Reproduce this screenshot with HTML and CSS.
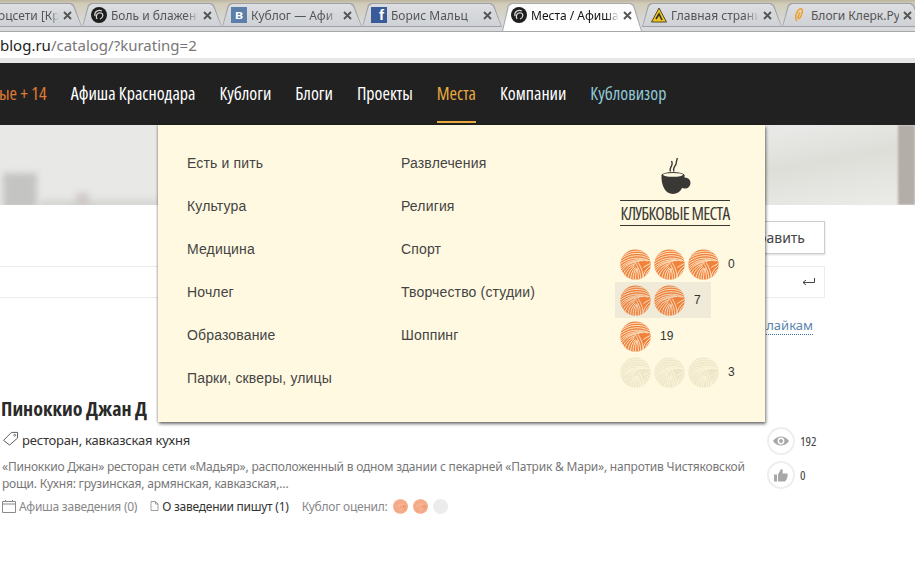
FILE: index.html
```html
<!DOCTYPE html>
<html lang="ru">
<head>
<meta charset="utf-8">
<title>Места / Афиша</title>
<link rel="stylesheet" href="styles.css">
</head>
<body>
<svg class="defs" width="0" height="0" aria-hidden="true">
  <defs>
    <clipPath id="ball-clip"><circle cx="16" cy="16" r="15.6"/></clipPath>
    <symbol id="ball" viewBox="0 0 32 32">
      <circle cx="16" cy="16" r="15.6" fill="currentColor"/>
      <g clip-path="url(#ball-clip)" fill="none" stroke="var(--gap)" stroke-width=".85">
        <path d="M2 8C9 2 20 0 28 5"/>
        <path d="M0 11C8 4 21 2 30 8"/>
        <path d="M0 13.500C8 6.500 21 4.500 31 10.500"/>
        <path d="M0 16C8 9 21 7 32 13"/>
        <path d="M0 19C7 12 18 9 29 12.500"/>
        <path d="M0 21.500C6 14.500 15 11.500 24 12"/>
        <path d="M1 24C5 17 12 13.500 20 13"/>
        <path d="M3 26C6 20 11 16 17 15"/>
        <path d="M5 28C7 23 10 19 15 16.500"/>
        <path d="M8 30C9 25 11 21 15 18"/>
        <path d="M11 31C11 26 13 22 16 19"/>
        <path d="M13.500 32C13.500 27 14.500 23 16.500 20"/>
        <path d="M16 32C16 27 16.500 23 17.500 20"/>
        <path d="M19 32C19 27 18.500 23 17.500 20"/>
        <path d="M21.500 32C21.500 26 20 21 17 16"/>
        <path d="M24 31C24 25 22 19 19 14.500"/>
        <path d="M23 32C24 25 27 20 32 17"/>
        <path d="M25.500 31C26.500 26 28.500 22 32 20"/>
        <path d="M28 29C28.500 26 30 24 32 23"/>
        <path d="M24 19L31 15"/>
      </g>
    </symbol>
    <symbol id="swirl" viewBox="0 0 16 16">
      <circle cx="8" cy="8" r="8" fill="#1e1e1e"/>
      <path d="M4 9C3 5 7 2 11 4M6 12C4 8 7 5 10 6C13 7 12 11 9 12" fill="none" stroke="#d8d8d8" stroke-width="1.2"/>
    </symbol>
    <symbol id="close" viewBox="0 0 9 9">
      <path d="M1 1L8 8M8 1L1 8" stroke="#555" stroke-width="1.9" fill="none"/>
    </symbol>
  </defs>
</svg>

<div class="tabstrip">
  <div class="tab tab-first"><span class="tab-title">оцсети [Кр</span><svg class="tab-x"><use href="#close"/></svg></div>
  <div class="tab"><svg class="fav"><use href="#swirl"/></svg><span class="tab-title">Боль и блажен</span><svg class="tab-x"><use href="#close"/></svg></div>
  <div class="tab"><span class="fav fav-vk">в</span><span class="tab-title">Кублог — Афи</span><svg class="tab-x"><use href="#close"/></svg></div>
  <div class="tab"><span class="fav fav-fb">f</span><span class="tab-title">Борис Мальц</span><svg class="tab-x"><use href="#close"/></svg></div>
  <div class="tab tab-active"><svg class="fav"><use href="#swirl"/></svg><span class="tab-title">Места / Афиша</span><svg class="tab-x"><use href="#close"/></svg></div>
  <div class="tab"><svg class="fav" viewBox="0 0 16 16"><path d="M8 1L15.500 15H.5Z" fill="#f2c21d" stroke="#4c4a32"/><path d="M5 12L8 7L11 13" fill="none" stroke="#333" stroke-width="1.6"/></svg><span class="tab-title">Главная страни</span><svg class="tab-x"><use href="#close"/></svg></div>
  <div class="tab tab-last"><svg class="fav" viewBox="0 0 16 16"><path d="M6 14C3 11 6 3 9 2C12 1 12 5 10 9C9 12 7 12 7 10L9 5" fill="none" stroke="#eda233" stroke-width="1.6"/></svg><span class="tab-title tab-title-full">Блоги Клерк.Ру</span><svg class="tab-x"><use href="#close"/></svg></div>
</div>

<div class="urlbar"><span class="url-host">blog.ru</span><span class="url-path">/catalog/?kurating=2</span></div>

<nav class="nav">
  <a class="nav-item nav-new">ые + 14</a>
  <a class="nav-item">Афиша Краснодара</a>
  <a class="nav-item">Кублоги</a>
  <a class="nav-item">Блоги</a>
  <a class="nav-item">Проекты</a>
  <a class="nav-item nav-current">Места</a>
  <a class="nav-item">Компании</a>
  <a class="nav-item nav-vision">Кубловизор</a>
</nav>

<div class="banner">
  <div class="bld bld-3"></div>
  <div class="bld bld-1"></div>
  <div class="bld bld-2"></div>
  <div class="banner-edge"></div>
</div>

<main class="page">
  <div class="toolbar"><button class="add-btn">Добавить</button></div>
  <div class="search">
    <svg class="enter" viewBox="0 0 13 8" width="13" height="8"><path d="M12.500 0V4.500H1M4 2L1 4.500L4 7" fill="none" stroke="#444"/></svg>
  </div>
  <div class="sort"><a class="sort-link">лайкам</a></div>

  <article class="item">
    <div class="item-main">
      <h2 class="item-title">Пиноккио Джан Д</h2>
      <div class="item-tags">
        <svg class="tag-icon" viewBox="0 0 18 16"><path d="M1.500 10L10 1.500H16.500V7.500L8 15Z" fill="none" stroke="#555" stroke-width="1"/><circle cx="13.500" cy="4.500" r="1" fill="none" stroke="#555" stroke-width=".8"/></svg>
        <span>ресторан, кавказская кухня</span>
      </div>
      <p class="item-desc">«Пиноккио Джан» ресторан сети «Мадьяр», расположенный в одном здании с пекарней «Патрик &amp; Мари», напротив Чистяковской рощи. Кухня: грузинская, армянская, кавказская,…</p>
      <div class="item-meta">
        <span class="meta-part meta-muted"><svg class="cal-icon" viewBox="0 0 14 14"><path d="M.5 2.500H13.500V13.500H.5ZM.5 5H13.500M3.500 1V3M10.500 1V3" fill="none" stroke="#8a8a8a"/></svg><span>Афиша заведения (0)</span></span>
        <span class="meta-part"><svg class="doc-icon" viewBox="0 0 9 10"><path d="M1 .5H5.500L8 3V9.500H1ZM5.500 .5V3H8" fill="none" stroke="#888" stroke-width=".8"/></svg><span>О заведении пишут (1)</span></span>
        <span class="meta-part meta-muted meta-rated"><span>Кублог оценил:</span><svg class="ball-sm ball-on"><use href="#ball"/></svg><svg class="ball-sm ball-on"><use href="#ball"/></svg><span class="ball-off"></span></span>
      </div>
    </div>
    <aside class="item-stats">
      <div class="stat">
        <span class="stat-circle"><svg viewBox="0 0 16 12" width="16" height="12"><path d="M0 6C4 0 12 0 16 6C12 12 4 12 0 6Z" fill="#a8a8a8"/><circle cx="8" cy="6" r="3.400" fill="#fff"/><circle cx="8" cy="6" r="2" fill="#a8a8a8"/></svg></span>
        <span class="stat-num">192</span>
      </div>
      <div class="stat">
        <span class="stat-circle"><svg viewBox="0 0 14 14" width="14" height="14"><path d="M0 6.500H3V13.500H0ZM4 6.500L7 1C9 1 9 3 8.500 5.500H13C14 5.500 14 7 13.300 7.500C14 8.500 13.500 9.500 12.800 10C13 11 12.500 12 11.800 12.200C11.800 13.200 11 13.500 10 13.500H4Z" fill="#a8a8a8"/></svg></span>
        <span class="stat-num">0</span>
      </div>
    </aside>
  </article>
</main>

<div class="dropdown">
  <ul class="cat-list">
    <li>Есть и пить</li>
    <li>Культура</li>
    <li>Медицина</li>
    <li>Ночлег</li>
    <li>Образование</li>
    <li>Парки, скверы, улицы</li>
  </ul>
  <ul class="cat-list cat-list-2">
    <li>Развлечения</li>
    <li>Религия</li>
    <li>Спорт</li>
    <li>Творчество (студии)</li>
    <li>Шоппинг</li>
  </ul>
  <div class="clubs">
    <svg class="cup" viewBox="0 0 32 36" width="32" height="36">
      <path d="M9.500 13.500C8 10.500 10.500 9 11 6.500C11.300 5 11 4 10.500 3M13 13.500C11.500 10 14 9 15 6C15.500 4 15.500 2 16.500 0" fill="none" stroke="#3a3835" stroke-width="1.400"/>
      <circle cx="24" cy="25" r="5.500" fill="#3a3835"/>
      <ellipse cx="12" cy="17" rx="11.500" ry="3" fill="#3a3835"/>
      <path d="M.5 17H23.500C24 27 20 36 12 36C4 36 0 27 .5 17Z" fill="#3a3835"/>
      <ellipse cx="12" cy="16.800" rx="10" ry="1.900" fill="#fff9e1"/>
    </svg>
    <div class="clubs-title">КЛУБКОВЫЕ МЕСТА</div>
    <div class="rating">
      <div class="rating-row"><svg class="ball"><use href="#ball"/></svg><svg class="ball"><use href="#ball"/></svg><svg class="ball"><use href="#ball"/></svg><span class="rating-num">0</span></div>
      <div class="rating-row rating-row-hover"><svg class="ball"><use href="#ball"/></svg><svg class="ball"><use href="#ball"/></svg><span class="rating-num">7</span></div>
      <div class="rating-row"><svg class="ball"><use href="#ball"/></svg><span class="rating-num">19</span></div>
      <div class="rating-row rating-row-pale"><svg class="ball"><use href="#ball"/></svg><svg class="ball"><use href="#ball"/></svg><svg class="ball"><use href="#ball"/></svg><span class="rating-num">3</span></div>
    </div>
  </div>
</div>
</body>
</html>
```
FILE: styles.css
```css
* { box-sizing: border-box; }
html, body { margin: 0; padding: 0; }
body {
  width: 915px;
  height: 575px;
  overflow: hidden;
  position: relative;
  background: #fff;
  font-family: "Noto Sans", "Liberation Sans", sans-serif;
}
.defs { display: block; height: 0; }

/* browser chrome */
.tabstrip {
  display: flex;
  height: 31px;
  padding-top: 3px;
  margin-left: -58px;
  width: 973px;
  background: linear-gradient(#bdb5a1, #d2ccb9 4px, #d8d9db 24px, #d9dadc);
  overflow: hidden;
}
.tab {
  position: relative;
  isolation: isolate;
  flex: 0 0 140px;
  min-width: 0;
  height: 24px;
  display: flex;
  align-items: center;
  gap: 4px;
  padding: 0 10px 0 9px;
  font-size: 12px;
  color: #555;
  background: #9ea2a6;
  clip-path: polygon(0 100%, 6px 2px, 9px 0, calc(100% - 11px) 0, calc(100% - 8px) 2px, 100% 100%);
}
.tab::before {
  content: "";
  position: absolute;
  inset: 1px;
  background: linear-gradient(#dcdee1, #cfd2d6);
  clip-path: polygon(0 100%, 6px 2px, 9px 0, calc(100% - 11px) 0, calc(100% - 8px) 2px, 100% 100%);
  z-index: -1;
}
.tab-active {
  height: 28px;
  color: #111;
  background: #a9abad;
  padding-bottom: 4px;
}
.tab-active::before { background: linear-gradient(#fbfbfb, #fff); inset: 1px 1px 0 1px; }
.fav { width: 16px; height: 16px; flex: none; }
.fav-vk, .fav-fb {
  display: block;
  background: #5b7fa8;
  color: #fff;
  font: bold 13px/16px "Liberation Sans", sans-serif;
  text-align: center;
}
.fav-fb { background: #3b5a9a; text-align: right; padding-right: 3px; font-size: 15px; }
.tab-title {
  flex: 1;
  min-width: 0;
  overflow: hidden;
  white-space: nowrap;
  -webkit-mask-image: linear-gradient(90deg, #000 85%, transparent);
  mask-image: linear-gradient(90deg, #000 85%, transparent);
}
.tab-title-full { -webkit-mask-image: none; mask-image: none; }
.tab-x { width: 9px; height: 9px; flex: none; }
.tab-first { padding-left: 56px; }

.urlbar {
  height: 32px;
  background: #fff;
  border-top: 1px solid #a6a7a8;
  border-bottom: 5px solid #e6e6e6;
  font: 15px/27px "Noto Sans", sans-serif;
  color: #222;
  white-space: nowrap;
}
.url-path { color: #777; }

/* site nav */
.nav {
  height: 62px;
  background: #212121;
  display: flex;
  gap: 24px;
  margin-left: -1px;
  font-family: "Open Sans", "Liberation Sans Narrow", sans-serif;
  font-stretch: 75%;
  font-size: 18px;
  font-weight: 500;
  line-height: 60px;
  white-space: nowrap;
}
.nav-item { color: #fff; height: 60px; }
.nav-new { color: #e07b36; }
.nav-current { color: #e8a93e; border-bottom: 2px solid #e8a93e; }
.nav-vision { color: #8fc9d8; }

.banner {
  position: relative;
  height: 80px;
  overflow: hidden;
  background: linear-gradient(170deg, #e8e8e6 60%, #deded9 75%, #ecece9);
}
.bld { position: absolute; bottom: -4px; background: #c4c5c3; filter: blur(3px); }
.bld-1 { left: 3px; width: 34px; height: 36px; }
.bld-2 { left: 76px; width: 13px; height: 16px; background: #cfcac8; }
.bld-3 { left: 40px; width: 120px; height: 9px; background: #d4d4d2; }
.banner-edge { position: absolute; right: 0; top: 0; bottom: 0; width: 17px; background: #b4aea8; filter: blur(1px); }

/* page */
.page { width: 825px; }
.toolbar { display: flex; justify-content: flex-end; padding-top: 16px; }
.add-btn {
  width: 190px;
  height: 33px;
  background: #fff;
  border: 1px solid #ccc;
  box-shadow: 0 1px 2px rgba(0, 0, 0, .15);
  font: 14px "Noto Sans", sans-serif;
  color: #444;
  text-align: right;
  padding: 0 19px 0 0;
}
.search {
  height: 32px;
  margin-top: 12px;
  border: 1px solid #ececec;
  border-left: 0;
  display: flex;
  align-items: center;
  justify-content: flex-end;
  padding-right: 9px;
}
.enter { display: block; }
.sort { text-align: right; padding: 18px 12px 0 0; height: 41px; font-size: 13px; line-height: 18px; }
.sort-link { color: #5b84ae; border-bottom: 1px dotted #3a6ea5; }

.item { display: flex; padding-left: 2px; width: 825px; margin-top: 56px; }
.item-main { width: 765px; flex: none; }
.item-title {
  margin: 0 0 0 -1px;
  font-family: "Open Sans", "Noto Sans", sans-serif;
  font-stretch: 87.5%;
  font-size: 20px;
  line-height: 28px;
  font-weight: 700;
  color: #2a2a2a;
  white-space: nowrap;
}
.item-tags { display: flex; align-items: center; gap: 3px; height: 20px; margin-top: 7px; font-size: 13px; letter-spacing: -.2px; color: #333; }
.tag-icon { width: 17px; height: 15px; margin-top: -4px; }
.item-desc { margin: 8px 0 0; font-size: 12px; line-height: 17px; letter-spacing: -.2px; color: #777; width: 745px; }
.item-meta { display: flex; align-items: center; height: 20px; margin-top: 4px; font-size: 12px; letter-spacing: -.25px; color: #333; }
.meta-part { display: flex; align-items: center; gap: 3px; white-space: nowrap; margin-right: 13px; }
.meta-muted { color: #888; }
.cal-icon { width: 14px; height: 14px; }
.doc-icon { width: 9px; height: 10px; }
.meta-rated { gap: 5px; }
.ball-sm { width: 15px; height: 15px; }
.ball-on { color: #f39a70; --gap: #fbd2bd; }
.ball-off { display: block; width: 15px; height: 15px; border-radius: 50%; background: #ececec; }

.item-stats { display: flex; flex-direction: column; gap: 6px; padding-top: 32px; }
.stat {
  display: flex;
  align-items: center;
  gap: 5px;
  font-family: "Open Sans", sans-serif;
  font-stretch: 75%;
  font-size: 13px;
  color: #444;
}
.stat-circle {
  width: 28px; height: 28px;
  border: 2px solid #eee;
  border-radius: 50%;
  display: flex;
  align-items: center;
  justify-content: center;
}

/* dropdown */
.dropdown {
  position: absolute;
  left: 158px;
  top: 125px;
  width: 607px;
  height: 297px;
  background: #fff9e1;
  box-shadow: 1px 2px 3px rgba(0, 0, 0, .55), -1px 0 2px rgba(0, 0, 0, .2);
  display: flex;
  font-family: "Liberation Sans", sans-serif;
}
.cat-list {
  list-style: none;
  margin: 0;
  padding: 17px 0 0 29px;
  width: 243px;
  font-size: 14px;
  letter-spacing: .15px;
  color: #444;
  line-height: 43px;
}
.cat-list-2 { width: 219px; padding-left: 0; }
.clubs { width: 145px; position: relative; display: flex; flex-direction: column; }
.cup { margin: 33px 0 0 41px; display: block; flex: none; }
.clubs-title {
  width: 110px;
  margin: 6px 0 0 0;
  border-top: 1px solid #3a3835;
  border-bottom: 1px solid #3a3835;
  height: 26px;
  font-family: "Open Sans", "Liberation Sans Narrow", sans-serif;
  font-stretch: 75%;
  font-size: 17.5px;
  letter-spacing: -.7px;
  line-height: 25px;
  color: #3a3835;
  text-align: center;
  white-space: nowrap;
}
.rating { margin: 20px 0 0 -5px; display: flex; flex-direction: column; align-items: flex-start; }
.rating-row {
  --gap: #fff9e1;
  color: #f0823c;
  height: 36px;
  width: 96px;
  padding: 0 0 0 5px;
  display: flex;
  align-items: center;
  gap: 3px;
  font-size: 12px;
}
.rating-row-hover { background: #f0ebd9; --gap: #f0ebd9; }
.rating-row-pale { color: #efe6c8; }
.ball { width: 31px; height: 31px; flex: none; }
.rating-num { color: #333; margin-left: 6px; }
```
